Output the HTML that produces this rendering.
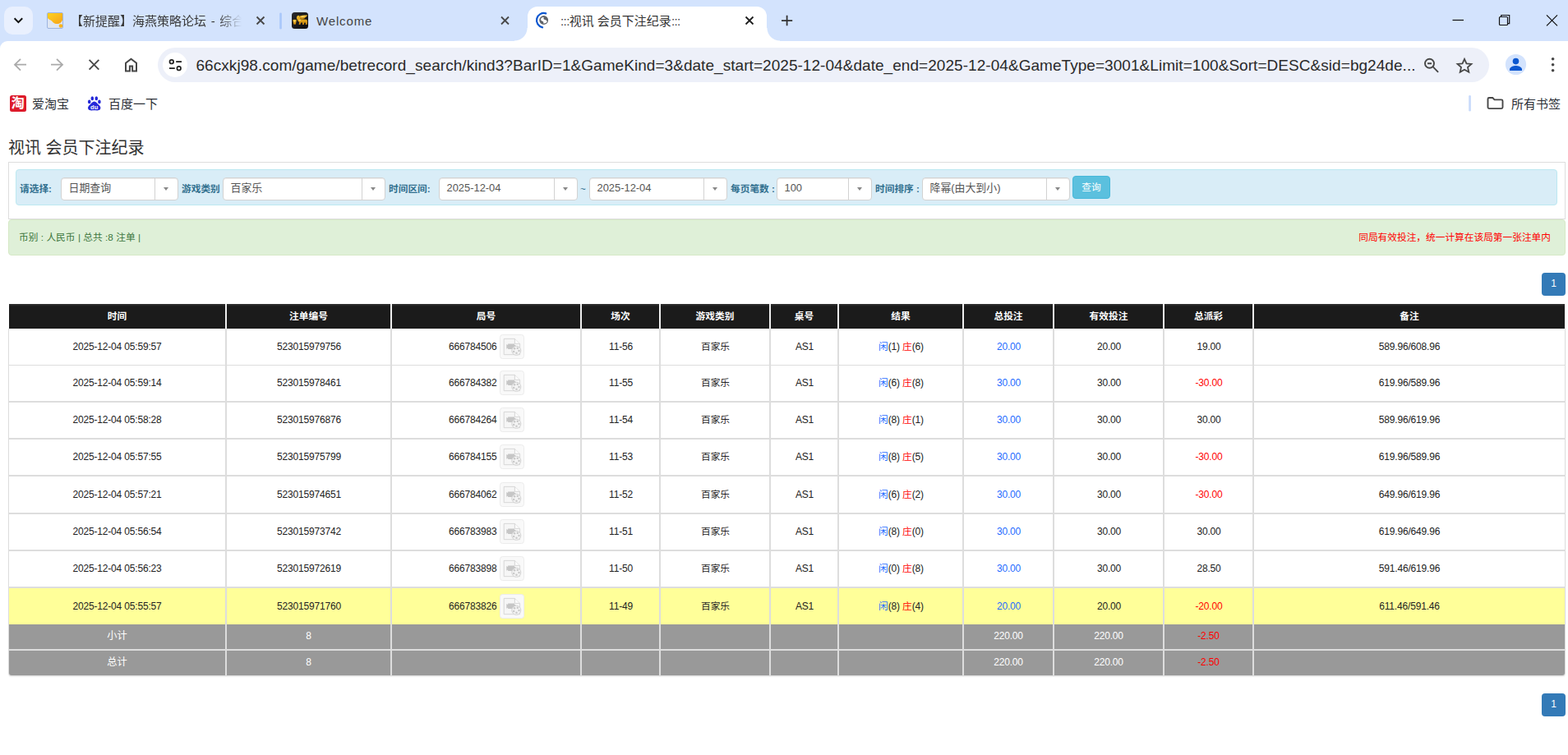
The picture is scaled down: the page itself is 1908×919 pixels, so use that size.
<!DOCTYPE html>
<html lang="zh-CN">
<head>
<meta charset="utf-8">
<title>:::视讯 会员下注纪录:::</title>
<style>
*{box-sizing:border-box;margin:0;padding:0}
html,body{width:1908px;height:919px;overflow:hidden;background:#fff}
body{position:relative;font-family:"Liberation Sans","Noto Sans CJK SC",sans-serif;font-size:11.7px;color:#222}
svg{position:absolute;overflow:visible}
/* ---------- browser chrome ---------- */
#tabstrip{position:absolute;left:0;top:0;width:1908px;height:62px;background:#d3e3fd}
#toolbar{position:absolute;left:0;top:50px;width:1908px;height:60px;background:#fff;border-radius:9px 0 0 0}
#tabsearch{position:absolute;left:5px;top:8px;width:35px;height:34px;border-radius:10px;background:#e9f0fe}
.tt{position:absolute;top:15px;height:22px;line-height:22px;font-size:15px;color:#2b2f36;white-space:nowrap;overflow:hidden}
#acttab{position:absolute;left:642px;top:7.7px;width:290.6px;height:42.8px;background:#fff;border-radius:12px 12px 0 0}
#acttab:before,#acttab:after{content:"";position:absolute;bottom:0.5px;width:16px;height:16px}
#acttab:before{left:-16px;background:radial-gradient(circle at 0 0,rgba(255,255,255,0) 15px,#fff 16px)}
#acttab:after{right:-16px;background:radial-gradient(circle at 100% 0,rgba(255,255,255,0) 15px,#fff 16px)}
#omni{position:absolute;left:192px;top:58px;width:1620px;height:42px;border-radius:21px;background:#edf0f9}
#siteinfo{position:absolute;left:198px;top:64px;width:30px;height:30px;border-radius:15px;background:#fff}
#url{position:absolute;left:238.5px;top:67px;height:26px;line-height:26px;font-size:19px;letter-spacing:0.05px;color:#2a2a2a;white-space:nowrap}
.bm{position:absolute;top:116px;height:22px;line-height:22px;font-size:15px;color:#2b2f36;white-space:nowrap}
/* ---------- page ---------- */
#h{position:absolute;left:10px;top:166px;font-size:20px;line-height:28px;color:#333;white-space:nowrap}
#panel{position:absolute;left:10px;top:197px;width:1895px;height:70px;border:1px solid #ddd;background:#fff}
#filter{position:absolute;left:19px;top:206px;width:1876px;height:44px;background:#d9edf7;border:1px solid #bce8f1;border-radius:4px}
.lb{position:absolute;top:221px;height:18px;line-height:18px;font-size:11.7px;font-weight:bold;color:#31708f;white-space:nowrap}
.sel{position:absolute;top:216px;height:28px;background:#fff;border:1px solid #d2d2d2;border-radius:4px;font-size:12.9px;line-height:24px;color:#555;padding-left:8.5px;white-space:nowrap;box-shadow:inset 0 1px 1px rgba(0,0,0,.075)}
.sel i{position:absolute;right:0;top:0;width:27.6px;height:26px;border-left:1px solid #d2d2d2}
.sel i:after{content:"";position:absolute;left:10px;top:11px;border:3.5px solid transparent;border-top:4px solid #888;border-bottom:0}
#btn{position:absolute;left:1305px;top:214px;width:46px;height:28px;border-radius:4px;background:#5bc0de;border:1px solid #46b8da;color:#fff;font-size:11.7px;line-height:26px;text-align:center}
#alert{position:absolute;left:10px;top:267px;width:1895px;height:44px;background:#dff0d8;border:1px solid #d6e9c6;border-radius:4px;color:#3c763d;font-size:11.7px;line-height:42px}
#alert .l{position:absolute;left:12px;top:0;white-space:nowrap;word-spacing:0.15px}
#alert .r{position:absolute;right:17px;top:0;color:#f00;white-space:nowrap}
.pg{position:absolute;left:1876px;width:29px;height:28px;border-radius:4px;background:#337ab7;color:#fff;font-size:12px;line-height:27px;text-align:center}
#tbl{position:absolute;left:10px;top:370px;width:1895px;height:452px}
#tbg{position:absolute;left:0;top:30px;width:1895px;height:422px;background:#ddd;box-shadow:0 2px 2px -1px rgba(0,0,0,.2);border-radius:0 0 3px 3px}
.row{position:absolute;left:0;width:1895px}
.c{position:absolute;top:0;height:100%;text-align:center;white-space:nowrap;font-size:11.7px}
.hd{line-height:30px}
.hd .c{background:#1b1b1b;color:#fff;font-weight:bold;background-image:linear-gradient(#333,#1b1b1b 3px)}
.hd{background:linear-gradient(90deg,#fff 1px,#eee 1px,#eee 1894px,#fff 1894px)}
.bd .c{background:#fff;color:#222;font-size:12px;letter-spacing:-0.17px}
.cj{font-size:11.7px;letter-spacing:0}
.ft .cj{font-size:12.2px}
.yl .c{background:#ffff99}
.ft .c{background:#999;color:#fff;font-size:12px;letter-spacing:-0.17px}
.b{color:#1e6bff}.r{color:#f00}
.ic{display:inline-block;vertical-align:middle;width:29.4px;height:29.6px;border:1px solid #ececec;border-radius:3.5px;background:#f9f9f9;margin-left:3.6px;position:relative;top:-1px}
.ft.last .c:first-child{border-bottom-left-radius:3px}
.ft.last .c:last-child{border-bottom-right-radius:3px}
.bd .c.s{padding-left:1px}

</style>
</head>
<body>
<div id="tabstrip"></div>
<div id="toolbar"></div>
<div id="tabsearch"></div>
<div id="acttab"></div>
<div id="omni"></div>
<div id="siteinfo"></div>
<svg id="icons" width="1908" height="146" viewBox="0 0 1908 146" style="left:0;top:0">
<defs>
<linearGradient id="gy" x1="0" y1="0" x2="1" y2="1"><stop offset="0" stop-color="#ffd21e"/><stop offset="1" stop-color="#f6a31a"/></linearGradient>
<linearGradient id="gk" x1="0" y1="0" x2="1" y2="1"><stop offset="0" stop-color="#2a2a2a"/><stop offset="1" stop-color="#0c0c0c"/></linearGradient>
<linearGradient id="gg" x1="0" y1="0" x2="0" y2="1"><stop offset="0" stop-color="#f7c22c"/><stop offset="1" stop-color="#c9870a"/></linearGradient>
</defs>
<!-- tab search chevron -->
<path d="M17.6 22.3l4.8 4.8l4.8-4.8" fill="none" stroke="#111" stroke-width="2"/>
<!-- tab1 favicon -->
<rect x="57.5" y="15.5" width="19" height="19" rx="1.5" fill="#dfe6f1" stroke="#9db4e0"/>
<path d="M58 16h18v8.5c-1 2-2 4.500-6.500 4.500c-4 0-5-2-6.500-3.500c-2-2-4-1.500-5-3.500z" fill="url(#gy)"/>
<circle cx="74" cy="31.500" r="2.300" fill="#f9b41c"/>
<!-- tab close buttons -->
<path d="M312.500 20.500l9 9m0-9l-9 9" stroke="#474747" stroke-width="1.800" fill="none"/>
<path d="M610 20.500l9 9m0-9l-9 9" stroke="#474747" stroke-width="1.800" fill="none"/>
<path d="M907.500 20.500l9 9m0-9l-9 9" stroke="#1f1f1f" stroke-width="1.800" fill="none"/>
<!-- tab separator -->
<rect x="340.200" y="15.500" width="2.600" height="20" rx="1.300" fill="#a8c7fa"/>
<!-- tab2 favicon -->
<rect x="355" y="15" width="20" height="20" rx="3.5" fill="url(#gk)"/>
<g fill="url(#gg)">
<path d="M356.300 24.200q2.300-0.900 4.600 0l-1 5.300q-1.300 0.500-2.600 0z"/>
<path d="M360.900 21.200q0.300-2.600 2.300-2.500q1.600 0.200 1.700 2.300l0.600 2.300l7.600 0.500q1.500 1.700 0.900 3.900l-0.400 2.200h-1.900l0.300-2.200l-1.700-0.300l-0.500 2.500h-1.800l0.100-2.500h-2l-0.700 2.500h-1.800l0.500-2.800q-2-0.900-2.200-3q-1.200-1.300-1-2.900z"/>
<path d="M364.600 19.500q4.800-1.600 9.500-0.900q-0.700 1.700-2.400 2.600q-1.200 1.500-3.200 1.800l-3.300-0.300q-0.100-1.700-0.600-3.200z"/>
</g>
<path d="M366 20.200q3-1 6-0.800q-2 1.300-4.500 1.600z M363.500 24.500q1.200-0.700 2.500-0.200l-0.800 1.400q-1 0-1.700-1.200z M357.500 25q1-0.400 2 0l-0.300 1.500h-1.400z" fill="#ffe589" opacity="0.850"/>
<!-- active tab spinner + globe -->
<path d="M664.26 16.33A8.75 8.75 0 1 0 660.08 33.3" fill="none" stroke="#0b57d0" stroke-width="2.200" stroke-linecap="round"/>
<circle cx="661.700" cy="24.500" r="5.400" fill="#5f6368"/>
<path d="M658 23.400C658.600 21.600 660.400 20.700 661.900 21.300C661 22.300 661.300 23.500 662.800 23.900C664.400 24.300 665.700 24.800 665.700 26.300C664.900 28.100 662.700 28.900 660.900 28.300C661.700 27.300 661.600 26.300 660.400 25.900C659 25.400 658 24.800 658 23.400Z" fill="#fff"/>
<!-- new tab -->
<path d="M951 25.100h13.200M957.600 18.800v12.400" stroke="#333" stroke-width="1.800" fill="none"/>
<!-- window controls -->
<path d="M1767.500 24.500h13.500" stroke="#111" stroke-width="1.200" fill="none"/>
<rect x="1824.500" y="20.500" width="10" height="10" rx="1" fill="none" stroke="#111" stroke-width="1.200"/>
<path d="M1826.700 20.300v-1.800h10v10.200h-2" fill="none" stroke="#111" stroke-width="1.200"/>
<path d="M1882 18.300l13 13m0-13l-13 13" stroke="#111" stroke-width="1.200" fill="none"/>
<!-- nav -->
<path d="M32 78.700h-13.500M25 71.800l-7 6.900l7 6.900" fill="none" stroke="#aaa" stroke-width="1.800"/>
<path d="M62 78.700h13.500M69 71.800l7 6.900l-7 6.900" fill="none" stroke="#aaa" stroke-width="1.800"/>
<path d="M108.600 72.900l11.700 11.700m0-11.700l-11.700 11.700" fill="none" stroke="#474747" stroke-width="1.900"/>
<path d="M153 86.600v-9.900l6.500-5l6.500 5v9.900h-4.900v-6h-3.200v6z" fill="none" stroke="#474747" stroke-width="2" stroke-linejoin="miter"/>
<!-- site info (tune) -->
<circle cx="208.800" cy="75.200" r="2.300" fill="none" stroke="#1f1f1f" stroke-width="1.700"/>
<path d="M214.200 75.200h6.800M206 83.200h6.800" stroke="#1f1f1f" stroke-width="1.700" fill="none"/>
<circle cx="217.700" cy="83.200" r="2.300" fill="none" stroke="#1f1f1f" stroke-width="1.700"/>
<!-- zoom out -->
<circle cx="1739.500" cy="77.200" r="5.500" fill="none" stroke="#474747" stroke-width="1.900"/>
<path d="M1743.500 81.200l6.600 6.600M1737 77.200h5" stroke="#474747" stroke-width="1.900" fill="none"/>
<!-- star -->
<path d="M1782 71.800l2.500 5.500l6 0.600l-4.500 4l1.300 5.900l-5.300-3.100l-5.300 3.100l1.300-5.900l-4.500-4l6-0.600z" fill="none" stroke="#474747" stroke-width="1.800" stroke-linejoin="miter"/>
<!-- avatar -->
<circle cx="1844.500" cy="78.500" r="12.600" fill="#d3e3fd"/>
<circle cx="1844.500" cy="74.600" r="3.800" fill="#0b57d0"/>
<path d="M1837 86v-1.500c0-3 5-4.400 7.500-4.400s7.500 1.400 7.500 4.400v1.500z" fill="#0b57d0"/>
<!-- menu -->
<circle cx="1889.600" cy="71.800" r="1.800" fill="#474747"/><circle cx="1889.600" cy="78.800" r="1.800" fill="#474747"/><circle cx="1889.600" cy="85.700" r="1.800" fill="#474747"/>
<!-- bookmarks -->
<rect x="12" y="116" width="20" height="20" rx="2.500" fill="#dd1b2b"/>
<path d="M114.700 123.400C117 123.400 118.300 126 120.400 127.800C122.500 129.600 122.900 131.600 121.900 133.100C120.600 134.900 118 134.300 114.700 134.300C111.400 134.300 108.800 134.900 107.500 133.100C106.500 131.600 106.900 129.600 109 127.800C111.100 126 112.400 123.400 114.700 123.400Z" fill="#2529d8"/>
<ellipse cx="108.700" cy="123.900" rx="1.800" ry="2.300" fill="#2529d8"/><ellipse cx="112.300" cy="119.800" rx="1.800" ry="2.500" fill="#2529d8"/><ellipse cx="117.300" cy="119.800" rx="1.800" ry="2.500" fill="#2529d8"/><ellipse cx="120.900" cy="123.900" rx="1.800" ry="2.300" fill="#2529d8"/>
<rect x="1787.200" y="116" width="2.700" height="19.500" rx="1.300" fill="#c9dbfb"/>
<path d="M1810.500 120.500c0-0.800 0.700-1.500 1.500-1.500h4.300l2.200 2.400h8.500c0.800 0 1.500 0.700 1.500 1.500v7.700c0 0.800-0.700 1.500-1.500 1.500h-15c-0.800 0-1.500-0.700-1.500-1.500z" fill="none" stroke="#474747" stroke-width="1.900"/>
<text x="21.700" y="131.300" font-family="'Liberation Sans','Noto Sans CJK SC',sans-serif" font-size="16" font-weight="bold" fill="#fff" text-anchor="middle">淘</text>
<text x="114.700" y="133" font-family="'Liberation Sans',sans-serif" font-size="7.500" font-weight="bold" fill="#fff" text-anchor="middle">du</text>
</svg>
<div class="tt" style="left:86px;width:212px;word-spacing:1.5px;color:#3a3a3a;-webkit-mask-image:linear-gradient(90deg,#000 180px,transparent 208px);mask-image:linear-gradient(90deg,#000 180px,transparent 208px)">【新提醒】海燕策略论坛 - 综合</div>
<div class="tt" style="left:385px;font-size:15px;letter-spacing:0.85px;color:#444">Welcome</div>
<div class="tt" style="left:682px;color:#333"><span style="letter-spacing:-0.6px">:::</span>视讯 会员下注纪录<span style="letter-spacing:-0.6px">:::</span></div>
<div id="url">66cxkj98.com/game/betrecord_search/kind3?BarID=1&amp;GameKind=3&amp;date_start=2025-12-04&amp;date_end=2025-12-04&amp;GameType=3001&amp;Limit=100&amp;Sort=DESC&amp;sid=bg24de...</div>
<div class="bm" style="left:39px">爱淘宝</div>
<div class="bm" style="left:132px">百度一下</div>
<div class="bm" style="left:1839px">所有书签</div>

<div id="page">
<div id="h">视讯 会员下注纪录</div>
<div id="panel"></div><div id="filter"></div>
<div class="lb" style="left:24px">请选择:</div>
<div class="lb" style="left:221px">游戏类别</div>
<div class="lb" style="left:473px">时间区间:</div>
<div class="lb" style="left:889px">每页笔数 :</div>
<div class="lb" style="left:1065px">时间排序 :</div>
<div class="sel" style="left:74px;width:142.5px">日期查询<i></i></div>
<div class="sel" style="left:271px;width:197.5px">百家乐<i></i></div>
<div class="sel" style="left:534px;width:168.5px">2025-12-04<i></i></div>
<div class="sel" style="left:717px;width:167.5px">2025-12-04<i></i></div>
<div class="sel" style="left:945px;width:115.5px">100<i></i></div>
<div class="sel" style="left:1122px;width:179.5px">降幂(由大到小)<i></i></div>
<div class="lb" style="left:706px;font-weight:normal;color:#31708f">~</div>
<div id="btn">查询</div>
<div id="alert"><span class="l">币别 : 人民币 | 总共 :8 注单 |</span><span class="r">同局有效投注，统一计算在该局第一张注单内</span></div>
<div class="pg" style="top:332px">1</div>
<div id="tbl"><div id="tbg"></div>
<div class="row hd" style="top:0;height:30px"><div class="c" style="left:1px;width:263px">时间</div><div class="c" style="left:266px;width:199px">注单编号</div><div class="c" style="left:467px;width:229px">局号</div><div class="c" style="left:698px;width:94px">场次</div><div class="c" style="left:794px;width:132px">游戏类别</div><div class="c" style="left:928px;width:81px">桌号</div><div class="c" style="left:1011px;width:150px">结果</div><div class="c" style="left:1163px;width:108px">总投注</div><div class="c" style="left:1273px;width:132px">有效投注</div><div class="c" style="left:1407px;width:107px">总派彩</div><div class="c" style="left:1516px;width:378px">备注</div></div>
<div class="row bd" style="top:30px;height:44px;line-height:44px"><div class="c" style="left:1px;width:263px">2025-12-04 05:59:57</div><div class="c s" style="left:266px;width:199px">523015979756</div><div class="c" style="left:467px;width:229px"><span class="gn" style="margin-left:0.7px">666784506</span><span class="ic"><svg width="29" height="30" viewBox="0 0 29 30" style="left:-1.7px;top:-1px"><path d="M5.2 5.4h13.2l6.2 6v13.300h-19.400z" fill="#f6f6f6" stroke="#d2d2d2" stroke-width="0.9"/><path d="M18.400 5.400v6h6.200" fill="#fbfbfb" stroke="#d2d2d2" stroke-width="0.9"/><path d="M8.300 11.900l1.800 1.200v-1.500h8v1.500h1.300v3.400h-1.300v1.500h-8v-1.500l-1.800 1.200z" fill="#c6c6c6"/><circle cx="20.300" cy="19.800" r="5.500" fill="#f4f4f4" stroke="#cfcfcf" stroke-width="0.9"/><circle cx="18.100" cy="17.300" r="1.250" fill="#c9c9c9"/><circle cx="21.800" cy="16.700" r="1.250" fill="#c9c9c9"/><circle cx="23.500" cy="20" r="1.250" fill="#c9c9c9"/><circle cx="20.500" cy="22.800" r="1.250" fill="#c9c9c9"/><circle cx="17.200" cy="21" r="1.250" fill="#c9c9c9"/></svg></span></div><div class="c s" style="left:698px;width:94px">11-56</div><div class="c s" style="left:794px;width:132px"><span class="cj">百家乐</span></div><div class="c s" style="left:928px;width:81px">AS1</div><div class="c s" style="left:1011px;width:150px"><span class="b cj">闲</span>(1) <span class="r cj">庄</span>(6)</div><div class="c s" style="left:1163px;width:108px"><span class="b">20.00</span></div><div class="c s" style="left:1273px;width:132px">20.00</div><div class="c s" style="left:1407px;width:107px">19.00</div><div class="c" style="left:1516px;width:378px">589.96/608.96</div></div>
<div class="row bd" style="top:75px;height:43px;line-height:42px"><div class="c" style="left:1px;width:263px">2025-12-04 05:59:14</div><div class="c s" style="left:266px;width:199px">523015978461</div><div class="c" style="left:467px;width:229px"><span class="gn" style="margin-left:0.7px">666784382</span><span class="ic"><svg width="29" height="30" viewBox="0 0 29 30" style="left:-1.7px;top:-1px"><path d="M5.2 5.4h13.2l6.2 6v13.300h-19.400z" fill="#f6f6f6" stroke="#d2d2d2" stroke-width="0.9"/><path d="M18.400 5.400v6h6.200" fill="#fbfbfb" stroke="#d2d2d2" stroke-width="0.9"/><path d="M8.300 11.900l1.800 1.200v-1.500h8v1.500h1.300v3.400h-1.300v1.500h-8v-1.500l-1.800 1.200z" fill="#c6c6c6"/><circle cx="20.300" cy="19.800" r="5.500" fill="#f4f4f4" stroke="#cfcfcf" stroke-width="0.9"/><circle cx="18.100" cy="17.300" r="1.250" fill="#c9c9c9"/><circle cx="21.800" cy="16.700" r="1.250" fill="#c9c9c9"/><circle cx="23.500" cy="20" r="1.250" fill="#c9c9c9"/><circle cx="20.500" cy="22.800" r="1.250" fill="#c9c9c9"/><circle cx="17.200" cy="21" r="1.250" fill="#c9c9c9"/></svg></span></div><div class="c s" style="left:698px;width:94px">11-55</div><div class="c s" style="left:794px;width:132px"><span class="cj">百家乐</span></div><div class="c s" style="left:928px;width:81px">AS1</div><div class="c s" style="left:1011px;width:150px"><span class="b cj">闲</span>(6) <span class="r cj">庄</span>(8)</div><div class="c s" style="left:1163px;width:108px"><span class="b">30.00</span></div><div class="c s" style="left:1273px;width:132px">30.00</div><div class="c s" style="left:1407px;width:107px"><span class="r">-30.00</span></div><div class="c" style="left:1516px;width:378px">619.96/589.96</div></div>
<div class="row bd" style="top:120px;height:43px;line-height:42px"><div class="c" style="left:1px;width:263px">2025-12-04 05:58:28</div><div class="c s" style="left:266px;width:199px">523015976876</div><div class="c" style="left:467px;width:229px"><span class="gn" style="margin-left:0.7px">666784264</span><span class="ic"><svg width="29" height="30" viewBox="0 0 29 30" style="left:-1.7px;top:-1px"><path d="M5.2 5.4h13.2l6.2 6v13.300h-19.400z" fill="#f6f6f6" stroke="#d2d2d2" stroke-width="0.9"/><path d="M18.400 5.400v6h6.200" fill="#fbfbfb" stroke="#d2d2d2" stroke-width="0.9"/><path d="M8.300 11.900l1.800 1.200v-1.500h8v1.500h1.300v3.400h-1.300v1.500h-8v-1.500l-1.800 1.200z" fill="#c6c6c6"/><circle cx="20.300" cy="19.800" r="5.500" fill="#f4f4f4" stroke="#cfcfcf" stroke-width="0.9"/><circle cx="18.100" cy="17.300" r="1.250" fill="#c9c9c9"/><circle cx="21.800" cy="16.700" r="1.250" fill="#c9c9c9"/><circle cx="23.500" cy="20" r="1.250" fill="#c9c9c9"/><circle cx="20.500" cy="22.800" r="1.250" fill="#c9c9c9"/><circle cx="17.200" cy="21" r="1.250" fill="#c9c9c9"/></svg></span></div><div class="c s" style="left:698px;width:94px">11-54</div><div class="c s" style="left:794px;width:132px"><span class="cj">百家乐</span></div><div class="c s" style="left:928px;width:81px">AS1</div><div class="c s" style="left:1011px;width:150px"><span class="b cj">闲</span>(8) <span class="r cj">庄</span>(1)</div><div class="c s" style="left:1163px;width:108px"><span class="b">30.00</span></div><div class="c s" style="left:1273px;width:132px">30.00</div><div class="c s" style="left:1407px;width:107px">30.00</div><div class="c" style="left:1516px;width:378px">589.96/619.96</div></div>
<div class="row bd" style="top:165px;height:43px;line-height:42px"><div class="c" style="left:1px;width:263px">2025-12-04 05:57:55</div><div class="c s" style="left:266px;width:199px">523015975799</div><div class="c" style="left:467px;width:229px"><span class="gn" style="margin-left:0.7px">666784155</span><span class="ic"><svg width="29" height="30" viewBox="0 0 29 30" style="left:-1.7px;top:-1px"><path d="M5.2 5.4h13.2l6.2 6v13.300h-19.400z" fill="#f6f6f6" stroke="#d2d2d2" stroke-width="0.9"/><path d="M18.400 5.400v6h6.200" fill="#fbfbfb" stroke="#d2d2d2" stroke-width="0.9"/><path d="M8.300 11.900l1.800 1.200v-1.500h8v1.500h1.300v3.400h-1.300v1.500h-8v-1.500l-1.800 1.200z" fill="#c6c6c6"/><circle cx="20.300" cy="19.800" r="5.500" fill="#f4f4f4" stroke="#cfcfcf" stroke-width="0.9"/><circle cx="18.100" cy="17.300" r="1.250" fill="#c9c9c9"/><circle cx="21.800" cy="16.700" r="1.250" fill="#c9c9c9"/><circle cx="23.500" cy="20" r="1.250" fill="#c9c9c9"/><circle cx="20.500" cy="22.800" r="1.250" fill="#c9c9c9"/><circle cx="17.200" cy="21" r="1.250" fill="#c9c9c9"/></svg></span></div><div class="c s" style="left:698px;width:94px">11-53</div><div class="c s" style="left:794px;width:132px"><span class="cj">百家乐</span></div><div class="c s" style="left:928px;width:81px">AS1</div><div class="c s" style="left:1011px;width:150px"><span class="b cj">闲</span>(8) <span class="r cj">庄</span>(5)</div><div class="c s" style="left:1163px;width:108px"><span class="b">30.00</span></div><div class="c s" style="left:1273px;width:132px">30.00</div><div class="c s" style="left:1407px;width:107px"><span class="r">-30.00</span></div><div class="c" style="left:1516px;width:378px">619.96/589.96</div></div>
<div class="row bd" style="top:210px;height:44px;line-height:44px"><div class="c" style="left:1px;width:263px">2025-12-04 05:57:21</div><div class="c s" style="left:266px;width:199px">523015974651</div><div class="c" style="left:467px;width:229px"><span class="gn" style="margin-left:0.7px">666784062</span><span class="ic"><svg width="29" height="30" viewBox="0 0 29 30" style="left:-1.7px;top:-1px"><path d="M5.2 5.4h13.2l6.2 6v13.300h-19.400z" fill="#f6f6f6" stroke="#d2d2d2" stroke-width="0.9"/><path d="M18.400 5.400v6h6.200" fill="#fbfbfb" stroke="#d2d2d2" stroke-width="0.9"/><path d="M8.300 11.900l1.800 1.200v-1.500h8v1.500h1.300v3.400h-1.300v1.500h-8v-1.500l-1.800 1.200z" fill="#c6c6c6"/><circle cx="20.300" cy="19.800" r="5.500" fill="#f4f4f4" stroke="#cfcfcf" stroke-width="0.9"/><circle cx="18.100" cy="17.300" r="1.250" fill="#c9c9c9"/><circle cx="21.800" cy="16.700" r="1.250" fill="#c9c9c9"/><circle cx="23.500" cy="20" r="1.250" fill="#c9c9c9"/><circle cx="20.500" cy="22.800" r="1.250" fill="#c9c9c9"/><circle cx="17.200" cy="21" r="1.250" fill="#c9c9c9"/></svg></span></div><div class="c s" style="left:698px;width:94px">11-52</div><div class="c s" style="left:794px;width:132px"><span class="cj">百家乐</span></div><div class="c s" style="left:928px;width:81px">AS1</div><div class="c s" style="left:1011px;width:150px"><span class="b cj">闲</span>(6) <span class="r cj">庄</span>(2)</div><div class="c s" style="left:1163px;width:108px"><span class="b">30.00</span></div><div class="c s" style="left:1273px;width:132px">30.00</div><div class="c s" style="left:1407px;width:107px"><span class="r">-30.00</span></div><div class="c" style="left:1516px;width:378px">649.96/619.96</div></div>
<div class="row bd" style="top:256px;height:43px;line-height:42px"><div class="c" style="left:1px;width:263px">2025-12-04 05:56:54</div><div class="c s" style="left:266px;width:199px">523015973742</div><div class="c" style="left:467px;width:229px"><span class="gn" style="margin-left:0.7px">666783983</span><span class="ic"><svg width="29" height="30" viewBox="0 0 29 30" style="left:-1.7px;top:-1px"><path d="M5.2 5.4h13.2l6.2 6v13.300h-19.400z" fill="#f6f6f6" stroke="#d2d2d2" stroke-width="0.9"/><path d="M18.400 5.400v6h6.200" fill="#fbfbfb" stroke="#d2d2d2" stroke-width="0.9"/><path d="M8.300 11.900l1.800 1.200v-1.500h8v1.500h1.300v3.400h-1.300v1.500h-8v-1.500l-1.800 1.200z" fill="#c6c6c6"/><circle cx="20.300" cy="19.800" r="5.500" fill="#f4f4f4" stroke="#cfcfcf" stroke-width="0.9"/><circle cx="18.100" cy="17.300" r="1.250" fill="#c9c9c9"/><circle cx="21.800" cy="16.700" r="1.250" fill="#c9c9c9"/><circle cx="23.500" cy="20" r="1.250" fill="#c9c9c9"/><circle cx="20.500" cy="22.800" r="1.250" fill="#c9c9c9"/><circle cx="17.200" cy="21" r="1.250" fill="#c9c9c9"/></svg></span></div><div class="c s" style="left:698px;width:94px">11-51</div><div class="c s" style="left:794px;width:132px"><span class="cj">百家乐</span></div><div class="c s" style="left:928px;width:81px">AS1</div><div class="c s" style="left:1011px;width:150px"><span class="b cj">闲</span>(8) <span class="r cj">庄</span>(0)</div><div class="c s" style="left:1163px;width:108px"><span class="b">30.00</span></div><div class="c s" style="left:1273px;width:132px">30.00</div><div class="c s" style="left:1407px;width:107px">30.00</div><div class="c" style="left:1516px;width:378px">619.96/649.96</div></div>
<div class="row bd" style="top:301px;height:43px;line-height:42px"><div class="c" style="left:1px;width:263px">2025-12-04 05:56:23</div><div class="c s" style="left:266px;width:199px">523015972619</div><div class="c" style="left:467px;width:229px"><span class="gn" style="margin-left:0.7px">666783898</span><span class="ic"><svg width="29" height="30" viewBox="0 0 29 30" style="left:-1.7px;top:-1px"><path d="M5.2 5.4h13.2l6.2 6v13.300h-19.400z" fill="#f6f6f6" stroke="#d2d2d2" stroke-width="0.9"/><path d="M18.400 5.400v6h6.200" fill="#fbfbfb" stroke="#d2d2d2" stroke-width="0.9"/><path d="M8.300 11.900l1.800 1.200v-1.500h8v1.500h1.300v3.400h-1.300v1.500h-8v-1.500l-1.800 1.200z" fill="#c6c6c6"/><circle cx="20.300" cy="19.800" r="5.500" fill="#f4f4f4" stroke="#cfcfcf" stroke-width="0.9"/><circle cx="18.100" cy="17.300" r="1.250" fill="#c9c9c9"/><circle cx="21.800" cy="16.700" r="1.250" fill="#c9c9c9"/><circle cx="23.500" cy="20" r="1.250" fill="#c9c9c9"/><circle cx="20.500" cy="22.800" r="1.250" fill="#c9c9c9"/><circle cx="17.200" cy="21" r="1.250" fill="#c9c9c9"/></svg></span></div><div class="c s" style="left:698px;width:94px">11-50</div><div class="c s" style="left:794px;width:132px"><span class="cj">百家乐</span></div><div class="c s" style="left:928px;width:81px">AS1</div><div class="c s" style="left:1011px;width:150px"><span class="b cj">闲</span>(0) <span class="r cj">庄</span>(8)</div><div class="c s" style="left:1163px;width:108px"><span class="b">30.00</span></div><div class="c s" style="left:1273px;width:132px">30.00</div><div class="c s" style="left:1407px;width:107px">28.50</div><div class="c" style="left:1516px;width:378px">591.46/619.96</div></div>
<div class="row bd yl" style="top:346px;height:44px;line-height:44px"><div class="c" style="left:1px;width:263px">2025-12-04 05:55:57</div><div class="c s" style="left:266px;width:199px">523015971760</div><div class="c" style="left:467px;width:229px"><span class="gn" style="margin-left:0.7px">666783826</span><span class="ic"><svg width="29" height="30" viewBox="0 0 29 30" style="left:-1.7px;top:-1px"><path d="M5.2 5.4h13.2l6.2 6v13.300h-19.400z" fill="#f6f6f6" stroke="#d2d2d2" stroke-width="0.9"/><path d="M18.400 5.400v6h6.200" fill="#fbfbfb" stroke="#d2d2d2" stroke-width="0.9"/><path d="M8.300 11.900l1.800 1.200v-1.500h8v1.500h1.300v3.400h-1.300v1.500h-8v-1.500l-1.800 1.200z" fill="#c6c6c6"/><circle cx="20.300" cy="19.800" r="5.500" fill="#f4f4f4" stroke="#cfcfcf" stroke-width="0.9"/><circle cx="18.100" cy="17.300" r="1.250" fill="#c9c9c9"/><circle cx="21.800" cy="16.700" r="1.250" fill="#c9c9c9"/><circle cx="23.500" cy="20" r="1.250" fill="#c9c9c9"/><circle cx="20.500" cy="22.800" r="1.250" fill="#c9c9c9"/><circle cx="17.200" cy="21" r="1.250" fill="#c9c9c9"/></svg></span></div><div class="c s" style="left:698px;width:94px">11-49</div><div class="c s" style="left:794px;width:132px"><span class="cj">百家乐</span></div><div class="c s" style="left:928px;width:81px">AS1</div><div class="c s" style="left:1011px;width:150px"><span class="b cj">闲</span>(8) <span class="r cj">庄</span>(4)</div><div class="c s" style="left:1163px;width:108px"><span class="b">20.00</span></div><div class="c s" style="left:1273px;width:132px">20.00</div><div class="c s" style="left:1407px;width:107px"><span class="r">-20.00</span></div><div class="c" style="left:1516px;width:378px">611.46/591.46</div></div>
<div class="row ft" style="top:390px;height:30px;line-height:28px"><div class="c" style="left:1px;width:263px"><span class="cj">小计</span></div><div class="c" style="left:266px;width:199px">8</div><div class="c" style="left:467px;width:229px"></div><div class="c" style="left:698px;width:94px"></div><div class="c" style="left:794px;width:132px"></div><div class="c" style="left:928px;width:81px"></div><div class="c" style="left:1011px;width:150px"></div><div class="c" style="left:1163px;width:108px">220.00</div><div class="c" style="left:1273px;width:132px">220.00</div><div class="c" style="left:1407px;width:107px"><span class="r">-2.50</span></div><div class="c" style="left:1516px;width:378px"></div></div>
<div class="row ft last" style="top:422px;height:30px;line-height:28px"><div class="c" style="left:1px;width:263px"><span class="cj">总计</span></div><div class="c" style="left:266px;width:199px">8</div><div class="c" style="left:467px;width:229px"></div><div class="c" style="left:698px;width:94px"></div><div class="c" style="left:794px;width:132px"></div><div class="c" style="left:928px;width:81px"></div><div class="c" style="left:1011px;width:150px"></div><div class="c" style="left:1163px;width:108px">220.00</div><div class="c" style="left:1273px;width:132px">220.00</div><div class="c" style="left:1407px;width:107px"><span class="r">-2.50</span></div><div class="c" style="left:1516px;width:378px"></div></div>
</div>
<div class="pg" style="top:843.5px">1</div>
</div>
</body>
</html>
